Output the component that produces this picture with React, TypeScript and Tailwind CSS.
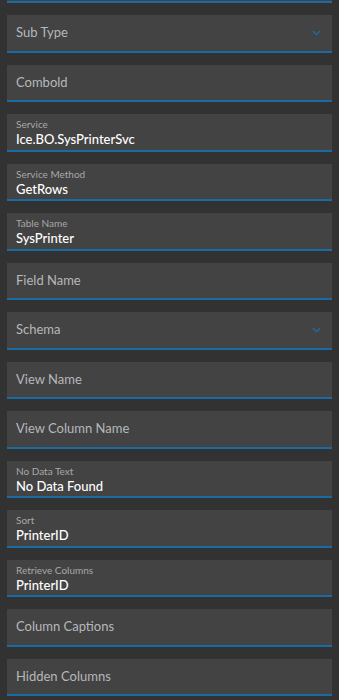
import { ChevronDown } from "lucide-react";

type Field = {
  label: string;
  value?: string;
  select?: boolean;
};

// first one is scrolled mostly out of view, so it shows no text
const fields: Field[] = [
  { label: "" },
  { label: "Sub Type", select: true },
  { label: "Combold" },
  { label: "Service", value: "Ice.BO.SysPrinterSvc" },
  { label: "Service Method", value: "GetRows" },
  { label: "Table Name", value: "SysPrinter" },
  { label: "Field Name" },
  { label: "Schema", select: true },
  { label: "View Name" },
  { label: "View Column Name" },
  { label: "No Data Text", value: "No Data Found" },
  { label: "Sort", value: "PrinterID" },
  { label: "Retrieve Columns", value: "PrinterID" },
  { label: "Column Captions" },
  { label: "Hidden Columns" },
];

function FieldBox({ field }: { field: Field }) {
  return (
    <div className="relative flex h-[37.5px] shrink-0 items-center border-b-2 border-[#1a6aa3] bg-[#434343] pl-[9px] pr-3">
      {field.value ? (
        <div className="flex flex-col pt-[2px] leading-none">
          <span className="text-[10px] text-[#a8a8a8]">{field.label}</span>
          <span className="mt-[4px] text-[13px] font-medium text-white">{field.value}</span>
        </div>
      ) : (
        <span className="text-[13px] text-[#b6b8ba]">{field.label}</span>
      )}
      {field.select && (
        <ChevronDown className="absolute right-[9px] top-1/2 -translate-y-1/2 text-[#1c6fa8]" size={13} strokeWidth={2.5} />
      )}
    </div>
  );
}

export default function App() {
  return (
    <div className="h-[700px] w-[339px] overflow-hidden bg-[#323232] px-[7px] font-['Lato','Open_Sans',sans-serif]">
      <div className="-mt-[34.5px] flex flex-col gap-[12px]">
        {fields.map((f, i) => (
          <FieldBox key={i} field={f} />
        ))}
      </div>
    </div>
  );
}
